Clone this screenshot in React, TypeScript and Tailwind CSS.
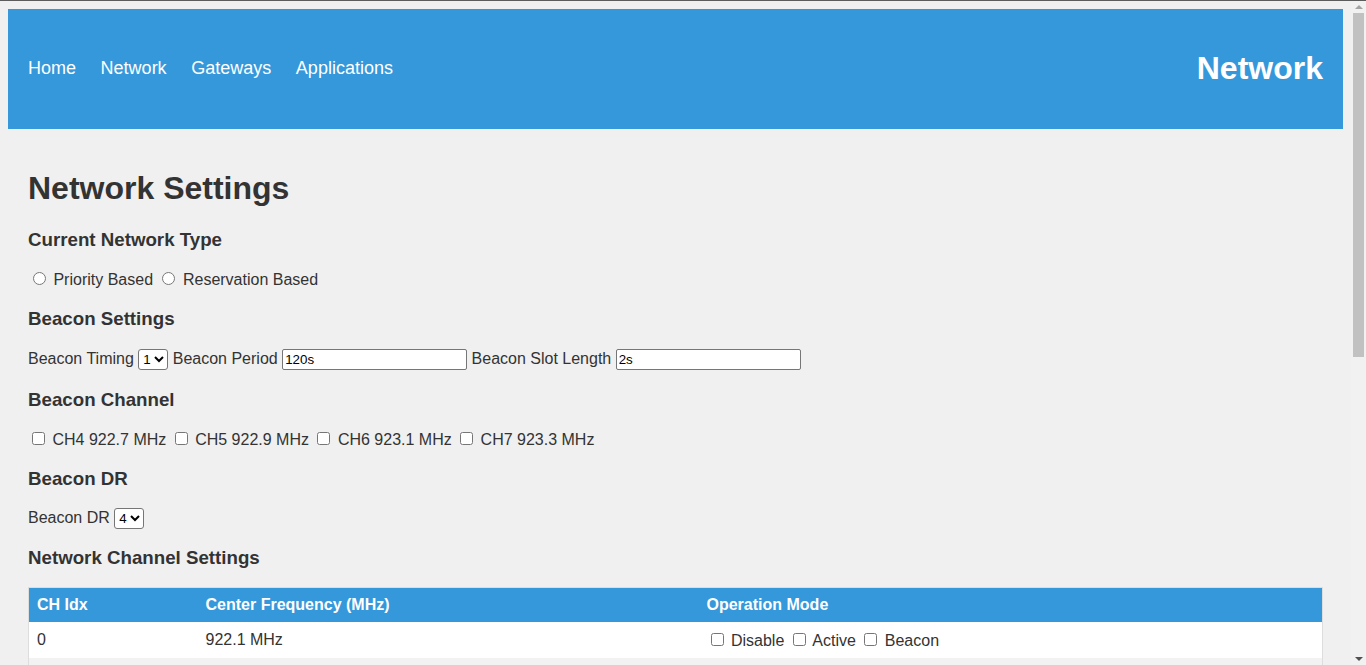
import React from "react";

const channels = [
  { idx: 0, freq: "922.1 MHz" },
  { idx: 1, freq: "922.3 MHz" },
];

function Radio({ name }: { name: string }) {
  return <input type="radio" name={name} className="mt-[3px] mr-[3px] ml-[5px] mb-0 w-[13px] h-[13px]" />;
}

function Check() {
  return <input type="checkbox" className="mt-[3px] mr-[3px] mb-[3px] ml-[4px] w-[13px] h-[13px]" />;
}

function Select({ value, options }: { value: string; options: string[] }) {
  return (
    <select
      defaultValue={value}
      className="h-[21px] border border-[#767676] rounded-[3px] bg-white text-[13.33px] text-black align-middle"
    >
      {options.map((o) => (
        <option key={o} value={o}>
          {o}
        </option>
      ))}
    </select>
  );
}

function TextInput({ value }: { value: string }) {
  return (
    <input
      type="text"
      defaultValue={value}
      className="w-[185px] h-[21px] border border-[#767676] rounded-[2px] bg-white px-[2px] py-px text-[13.33px] text-black align-middle"
    />
  );
}

function Scrollbar() {
  return (
    <div className="w-[15px] shrink-0 bg-[#f1f1f1] flex flex-col items-center pt-[5px] pb-[4px]">
      <svg width="8" height="4" viewBox="0 0 8 4" className="block">
        <path d="M0 4 L4 0 L8 4 Z" fill="#a3a3a3" />
      </svg>
      <div className="mt-[4px] w-[11px] h-[344px] bg-[#c1c1c1]" />
      <div className="flex-1" />
      <svg width="8" height="4" viewBox="0 0 8 4" className="block">
        <path d="M0 0 L8 0 L4 4 Z" fill="#505050" />
      </svg>
    </div>
  );
}

export default function App() {
  return (
    <div className="h-[665px] flex overflow-hidden bg-[#f0f0f0] font-['Liberation_Sans',Arial,sans-serif] text-[16px] leading-[1.15] text-[#333]">
      <div className="fixed top-0 left-0 right-0 h-px bg-[#5c5c5c]" />
      <div className="flex-1 min-w-0 overflow-hidden pt-[9px] px-2">
        <header className="h-[120px] bg-[#3498db] px-5 pb-[2px] flex items-center justify-between">
          <nav className="flex gap-[24.6px] text-[18px] text-white">
            <a>Home</a>
            <a>Network</a>
            <a>Gateways</a>
            <a>Applications</a>
          </nav>
          <div className="text-[32px] font-bold text-white">Network</div>
        </header>

        <main className="px-5 pt-5">
          <h1 className="text-[32px] font-bold my-[21.44px]">Network Settings</h1>

          <h3 className="text-[18.72px] font-bold my-[18.72px]">Current Network Type</h3>
          <p className="my-4">
            <Radio name="type" /> Priority Based <Radio name="type" /> Reservation Based
          </p>

          <h3 className="text-[18.72px] font-bold my-[18.72px]">Beacon Settings</h3>
          <p className="my-4 pt-px">
            Beacon Timing <Select value="1" options={["1", "2", "3", "4"]} /> Beacon Period{" "}
            <TextInput value="120s" /> Beacon Slot Length <TextInput value="2s" />
          </p>

          <h3 className="text-[18.72px] font-bold my-[18.72px]">Beacon Channel</h3>
          <p className="my-4">
            <Check /> CH4 922.7 MHz <Check /> CH5 922.9 MHz <Check /> CH6 923.1 MHz <Check /> CH7 923.3 MHz
          </p>

          <h3 className="text-[18.72px] font-bold my-[18.72px]">Beacon DR</h3>
          <p className="mt-[-1px] mb-4">
            Beacon DR <Select value="4" options={["0", "1", "2", "3", "4", "5"]} />
          </p>

          <h3 className="text-[18.72px] font-bold my-[18.72px]">Network Channel Settings</h3>
          <table className="mt-[-1px] w-full border-collapse border border-[#ddd]">
            <thead>
              <tr className="bg-[#3498db] text-white">
                <th className="w-[169px] p-2 text-left font-bold">CH Idx</th>
                <th className="w-[501px] p-2 text-left font-bold">Center Frequency (MHz)</th>
                <th className="p-2 text-left font-bold">Operation Mode</th>
              </tr>
            </thead>
            <tbody>
              {channels.map((c, i) => (
                <tr key={c.idx} className={i % 2 === 0 ? "bg-white" : "bg-[#f2f2f2]"}>
                  <td className="p-2">{c.idx}</td>
                  <td className="p-2">{c.freq}</td>
                  <td className="p-2">
                    <Check /> Disable <Check /> Active <Check /> Beacon
                  </td>
                </tr>
              ))}
            </tbody>
          </table>
        </main>
      </div>
      <Scrollbar />
    </div>
  );
}
